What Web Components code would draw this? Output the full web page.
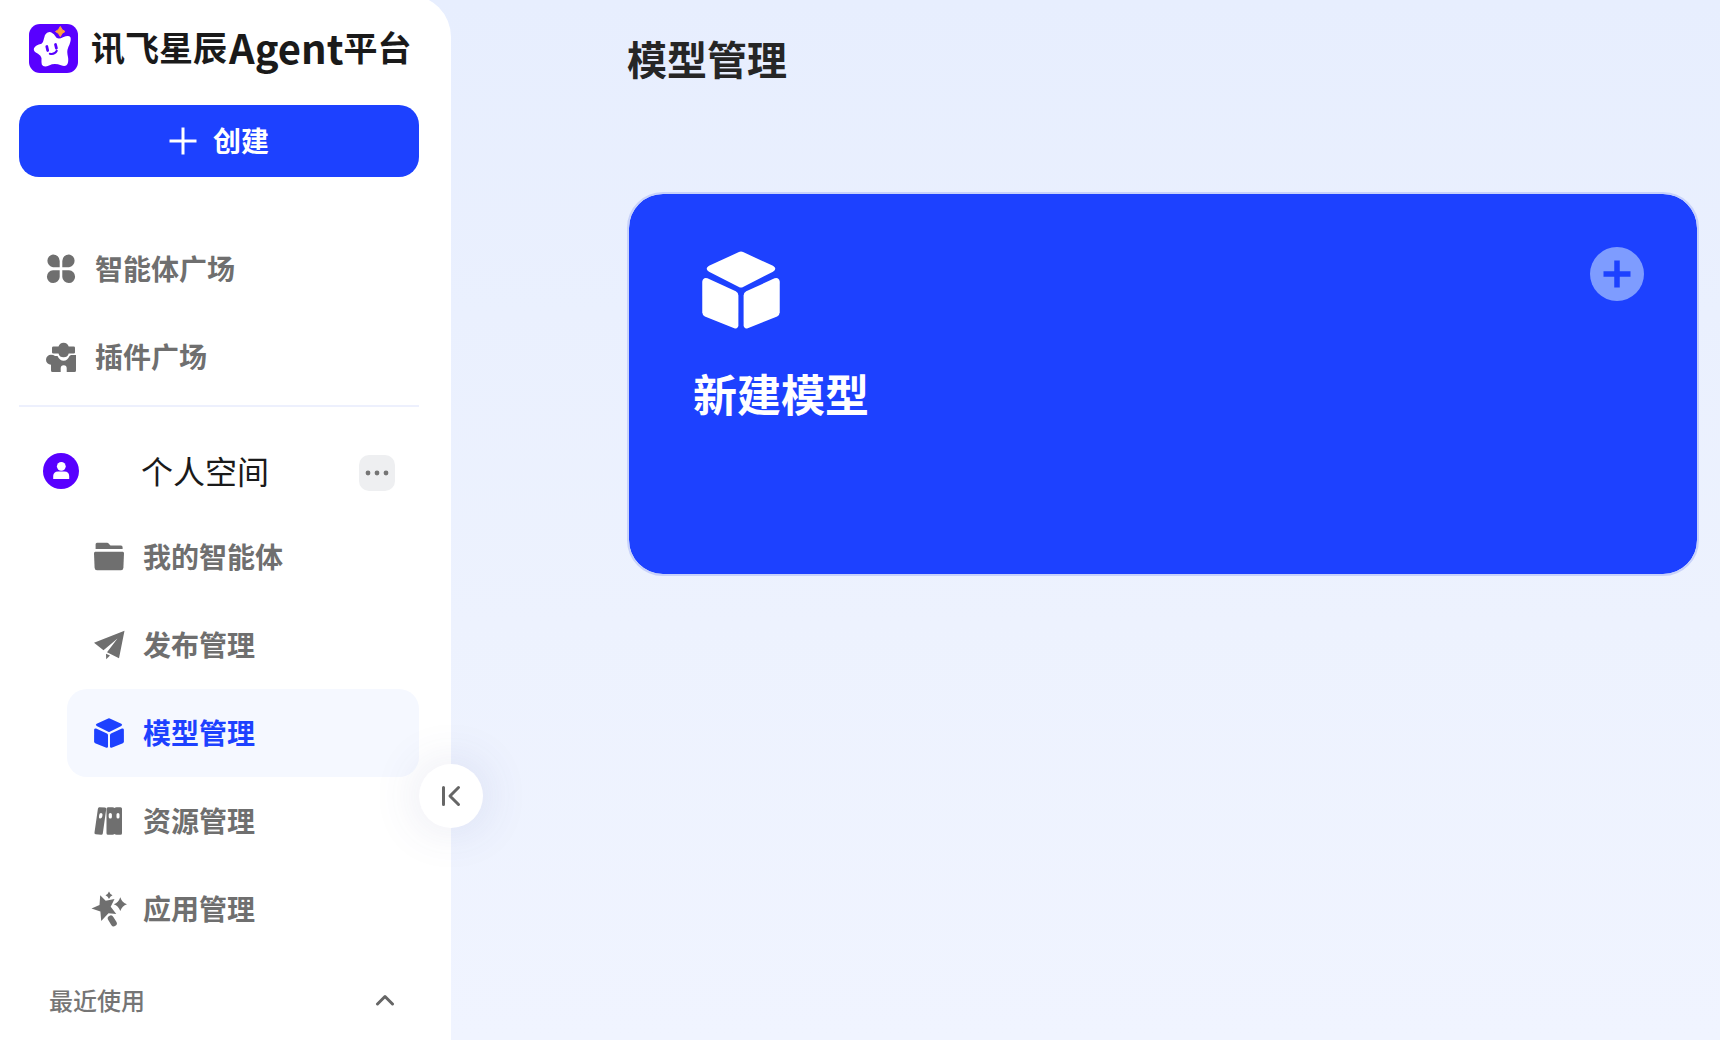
<!DOCTYPE html>
<html lang="zh-CN">
<head>
<meta charset="utf-8">
<title>模型管理</title>
<style>
  html, body { margin: 0; height: 100%; }
  body { font-family: "Noto Sans CJK SC", sans-serif; color: #1f1f1f; overflow: hidden; }
</style>
</head>
<body>
<app-shell>
  <side-bar slot="sidebar">
    <brand-mark slot="brand"></brand-mark>
    <create-button slot="create">创建</create-button>
    <nav-item slot="plaza" icon="clover">智能体广场</nav-item>
    <nav-item slot="plaza" icon="puzzle">插件广场</nav-item>
    <space-header slot="space">个人空间</space-header>
    <nav-item slot="menu" icon="folder">我的智能体</nav-item>
    <nav-item slot="menu" icon="plane">发布管理</nav-item>
    <nav-item slot="menu" icon="cube" active>模型管理</nav-item>
    <nav-item slot="menu" icon="books">资源管理</nav-item>
    <nav-item slot="menu" icon="wand">应用管理</nav-item>
    <recent-header slot="recent">最近使用</recent-header>
  </side-bar>
  <page-title>模型管理</page-title>
  <model-card>新建模型</model-card>
</app-shell>

<script>
const CUBE = `<path d="M14.200 .4q.8-.4 1.600 0L27.300 5.700q1.800 1.100 0 2.300L15.800 13.800q-.8.400-1.600 0L2.700 8q-1.800-1.200 0-2.300Z"/>
  <path d="M2.100 10.500 13 15.500q1 .6 1 1.600V28.700q-.2 1.400-1.600 1L1.100 25.200Q.1 24.600.1 23.600V11.800q.3-1.800 2-1.300Z"/>
  <path d="M27.900 10.500 17 15.500q-1 .6-1 1.600V28.700q.2 1.400 1.600 1L28.900 25.200Q29.900 24.600 29.900 23.600V11.800q-.3-1.800-2-1.300Z"/>`;

const ICONS = {
  clover: `<path d="M7 .5a6.500 6.500 0 0 1 6.700 6.500V13.200H7A6.400 6.400 0 0 1 7 .5Z"/><path d="M23 .5a6.400 6.400 0 0 1 0 12.700H16.300V7A6.500 6.500 0 0 1 23 .5Z"/><path d="M7 16.300h6.700V23A6.400 6.400 0 1 1 7 16.300Z"/><path d="M16.300 16.300H23A6.400 6.400 0 1 1 16.300 23Z"/>`,
  puzzle: `<path d="M7.500 4.500h5a5.300 5.300 0 0 1 10.200 0h5Q29 4.500 29 5.800V10.500q0 1-1.300 1h-5a5.300 5.300 0 0 1-10.200 0h-5Q6 11.500 6 10.500V5.800Q6 4.500 7.500 4.500Z"/><path d="M5 12.800Q7.500 12.800 9 14h2.500q2 4.500 6.200 4.800Q21.500 18.500 23.500 14l1.500-1H30V28.500Q30 30 28.500 30H20.700V26.300a3 3 0 0 0-6 0V30H6.500Q5 30 5 28.500V22.800a5 5 0 0 1 0-10Z"/>`,
  folder: `<path d="M3 .8H13q1.300 0 2 1.100L16.500 3.600H27Q28.600 3.600 28.600 5.300V6.900H1.600V2.300Q1.600 .8 3 .8Z"/><path d="M1.200 9.800H28.800Q30 9.800 30 11.300L29.400 25.800Q29.200 28.300 27 28.300H3Q.8 28.300 .6 25.800L0 11.300Q0 9.800 1.200 9.800Z"/>`,
  plane: `<path d="M30.500 .8 25 28.200 13 22.300 23.500 8.500 9.500 20.200 0 12.700Z"/><path d="M12 23.700 16 25.500 12.200 29.200Z"/>`,
  cube: CUBE,
  books: `<path fill-rule="evenodd" d="M5.400 1.200 11 1.500Q12.400 1.800 12.200 3.200L8.800 27.500Q8.500 29 7 28.700L1.600 28.300Q.2 28 .5 26.500L3.900 2.700Q4.200 1 5.400 1.200ZM7 7Q5.500 7 5.200 9t-.2 2.500Q5 12.500 6.200 12.500 7.800 12.500 8.200 10.800T8.500 8.500Q8.500 7 7 7Z"/><path fill-rule="evenodd" d="M14 1.200H18.500Q19.800 1.200 20.500 2 21.200 1.200 22.500 1.200H26.500Q28 1.200 28 2.700V27.200Q28 28.700 26.500 28.700H22.500Q21.200 28.700 20.500 28 19.800 28.700 18.500 28.700H14Q12.500 28.700 12.500 27.200V2.700Q12.500 1.200 14 1.200ZM16.300 7Q14.700 7 14.700 8.500V11Q14.700 12.500 16.300 12.500T17.900 11V8.500Q17.900 7 16.300 7ZM24 7Q22.500 7 22.500 8.500V11Q22.500 12.500 24 12.500T25.500 11V8.500Q25.500 7 24 7Z"/>`,
  wand: `<path d="M6.200 1.200 11.700 6.800 20.500 5 16.700 12.800 22.300 20 14.500 19.200 7.200 27 6.400 17.500-2.500 14.500 5.500 11Z"/><path d="M15-2.500Q16 .3 18.500 1.200 16 2.100 15 5 14 2.100 11.500 1.200 14 .3 15-2.500Z"/><path d="M26.300 3.300Q28 8.700 33 10.200 28 11.700 26.300 17 24.500 11.700 19.800 10.200 24.500 8.700 26.300 3.300Z"/><path d="M16.800 24.500 19.800 29.300" stroke="currentColor" stroke-width="6" stroke-linecap="round"/>`
};

function define(name, html, setup) {
  const template = document.createElement('template');
  template.innerHTML = html;
  customElements.define(name, class extends HTMLElement {
    connectedCallback() {
      if (this.shadowRoot) return;
      const root = this.attachShadow({ mode: 'open' });
      root.append(template.content.cloneNode(true));
      if (setup) setup(this, root);
    }
  });
}

define('app-shell', `
  <style>
    :host { display: flex; min-height: 100vh; background: linear-gradient(180deg, #e7eefe 0%, #edf2fe 60%, #f0f4ff 100%); }
    main { flex: 1; min-width: 0; display: flex; flex-direction: column; gap: 104px; padding: 28px 21px 32px 176px; }
  </style>
  <slot name="sidebar"></slot>
  <main><slot></slot></main>`);

define('side-bar', `
  <style>
    :host { display: block; position: relative; flex: none; width: 400px; margin-top: -5px; padding: 29px 32px 0 19px; height: calc(100vh - 24px); background: #fff; border-top-right-radius: 42px; }
    nav { display: flex; flex-direction: column; }
    .plaza { margin-top: 48px; }
    hr { margin: 4px 0 0; border: 0; height: 2px; background: #edf0fd; }
    .menu { margin-left: 48px; }
    .toggle { position: absolute; right: -32px; top: 769px; width: 64px; height: 64px; padding: 0; border: 0; border-radius: 50%; background: #fff; color: #666; display: grid; place-items: center; box-shadow: 0 0 50px rgba(70, 80, 150, .14); }
  </style>
  <slot name="brand"></slot>
  <slot name="create"></slot>
  <nav class="plaza" aria-label="广场"><slot name="plaza"></slot></nav>
  <hr>
  <slot name="space"></slot>
  <nav class="menu" aria-label="空间"><slot name="menu"></slot></nav>
  <slot name="recent"></slot>
  <button class="toggle" aria-label="收起"><svg width="20" height="22" viewBox="0 0 20 22" fill="none" stroke="currentColor" stroke-width="3" stroke-linecap="round" stroke-linejoin="round"><path d="M2.500 2.500V19.500M17.500 2.500 9 11l8.500 8.500"/></svg></button>`);

define('brand-mark', `
  <style>
    :host { display: flex; align-items: center; gap: 13px; height: 49px; padding-left: 10px; }
    svg { flex: none; }
    .name { display: flex; align-items: center; padding-bottom: 4px; font-size: 34px; line-height: 48px; font-weight: 700; color: #1a1a1a; white-space: nowrap; }
    .latin { padding-left: 2px; font-size: 40px; }
  </style>
  <svg width="49" height="49" viewBox="0 0 49 49">
    <rect width="49" height="49" rx="11" fill="#5800ff"/>
    <path d="M16 11Q18.500 7 22 8.300 25 9.500 27.500 13.800 30 15.500 34 13.300 39.500 11 41.300 13 42.500 15 40.500 20.500 37.500 26 38.500 30.500 40 37 38.500 40 37 43 32 41.300 25.500 38.800 20 41.500 14.500 43.700 12.800 40.500 12.300 38.500 12.500 34 12 31.500 9 29.800 3.800 27.500 5 24.300 6.500 21 12.500 19.800 14.200 19 14.700 15.500Z" fill="#fff"/>
    <path d="M31.300 2.500Q32.500 6.200 36 7.500 32.500 8.800 31.300 12.500 30 8.800 26.500 7.500 30 6.200 31.300 2.500Z" fill="#ff9c3f" stroke="#ff9c3f" stroke-width="1"/>
    <g fill="none" stroke="#5800ff" stroke-width="2.800" stroke-linecap="round"><path d="M17.800 22.500l.9 4M26.500 20.500l.9 3.700"/><path d="M20.800 29.800Q25.500 31 27.800 26.800" stroke-width="2"/></g>
  </svg>
  <div class="name"><span>讯飞星辰</span><span class="latin">Agent</span><span>平台</span></div>`);

define('create-button', `
  <style>
    :host { display: block; margin-top: 32px; }
    button { width: 100%; height: 72px; padding: 0; border: 0; border-radius: 20px; background: #1d41ff; color: #fff; font: 700 28px/40px "Noto Sans CJK SC", sans-serif; display: flex; align-items: center; justify-content: center; gap: 16px; }
    span { padding-bottom: 2px; }
  </style>
  <button><svg width="28" height="28" viewBox="0 0 28 28" stroke="currentColor" stroke-width="3"><path d="M14 .5V27.500M.5 14H27.500"/></svg><span><slot></slot></span></button>`);

define('nav-item', `
  <style>
    :host { display: block; color: #6f6f6f; }
    :host([active]) { color: #1d41ff; }
    a { display: flex; align-items: center; gap: 19px; height: 88px; padding: 0 27px; border-radius: 20px; color: inherit; text-decoration: none; font-size: 28px; line-height: 40px; font-weight: 700; white-space: nowrap; }
    :host([active]) a { background: #f5f8ff; }
    svg { flex: none; overflow: visible; fill: currentColor; }
    span { padding-bottom: 2px; }
  </style>
  <a href="#"><svg width="30" height="30" viewBox="0 0 30 30" aria-hidden="true"></svg><span><slot></slot></span></a>`,
  (host, root) => {
    root.querySelector('svg').innerHTML = ICONS[host.getAttribute('icon')];
    if (host.hasAttribute('active')) root.querySelector('a').setAttribute('aria-current', 'page');
  });

define('space-header', `
  <style>
    :host { display: flex; align-items: flex-start; height: 40px; margin-top: 46px; margin-bottom: 20px; padding: 0 24px; }
    .name { flex: 1; margin-left: 62px; font-size: 32px; line-height: 34px; color: #1a1a1a; }
    button { width: 36px; height: 36px; margin: 2px 0 0; padding: 0; border: 0; border-radius: 10px; background: #eeeff1; display: grid; place-items: center; }
  </style>
  <svg width="36" height="36" viewBox="0 0 36 36" aria-hidden="true"><circle cx="18" cy="18" r="18" fill="#5800ff"/><circle cx="18.300" cy="13.300" r="4.400" fill="#fff"/><path d="M10.200 26V23Q10.500 18.500 15 18.500H21.500Q26 18.500 26.200 23V26Z" fill="#fff"/></svg>
  <span class="name"><slot></slot></span>
  <button aria-label="更多"><svg width="24" height="6" viewBox="0 0 24 6" fill="#757575"><circle cx="3" cy="3" r="2.400"/><circle cx="12" cy="3" r="2.400"/><circle cx="21" cy="3" r="2.400"/></svg></button>`);

define('recent-header', `
  <style>
    :host { display: flex; align-items: center; justify-content: space-between; margin-top: 26px; padding: 0 24px 0 30px; height: 42px; color: #757575; font-size: 24px; line-height: 40px; font-weight: 500; }
    button { padding: 0; border: 0; background: none; color: #666; display: grid; }
  </style>
  <span><slot></slot></span>
  <button aria-label="折叠"><svg width="20" height="12" viewBox="0 0 20 12" fill="none" stroke="currentColor" stroke-width="3" stroke-linecap="round" stroke-linejoin="round"><path d="M2.500 10 10 2.500 17.500 10"/></svg></button>`);

define('page-title', `
  <style>
    :host { display: block; }
    h1 { margin: 0; font-size: 40px; line-height: 60px; font-weight: 700; color: #262626; }
  </style>
  <h1><slot></slot></h1>`);

define('model-card', `
  <style>
    :host { display: flex; justify-content: space-between; align-items: flex-start; box-sizing: border-box; min-height: 384px; padding: 53px 53px 53px 64px; border: 2px solid #c8d2fa; border-radius: 36px; background: #1d41ff; background-clip: padding-box; color: #fff; }
    .lead { display: flex; flex-direction: column; gap: 36px; }
    .lead svg { margin: 4px 0 0 9px; fill: #fff; }
    h2 { margin: 0; font-size: 44px; line-height: 56px; font-weight: 700; }
    button { width: 54px; height: 54px; padding: 0; border: 0; border-radius: 50%; background: #7e9cff; color: #1d41ff; display: grid; place-items: center; }
  </style>
  <div class="lead"><svg width="78" height="78" viewBox="0 0 30 30" aria-hidden="true">${CUBE}</svg><h2><slot></slot></h2></div>
  <button aria-label="新建模型"><svg width="28" height="28" viewBox="0 0 28 28" stroke="currentColor" stroke-width="5.500"><path d="M14 .5V27.500M.5 14H27.500"/></svg></button>`);
</script>
</body>
</html>
